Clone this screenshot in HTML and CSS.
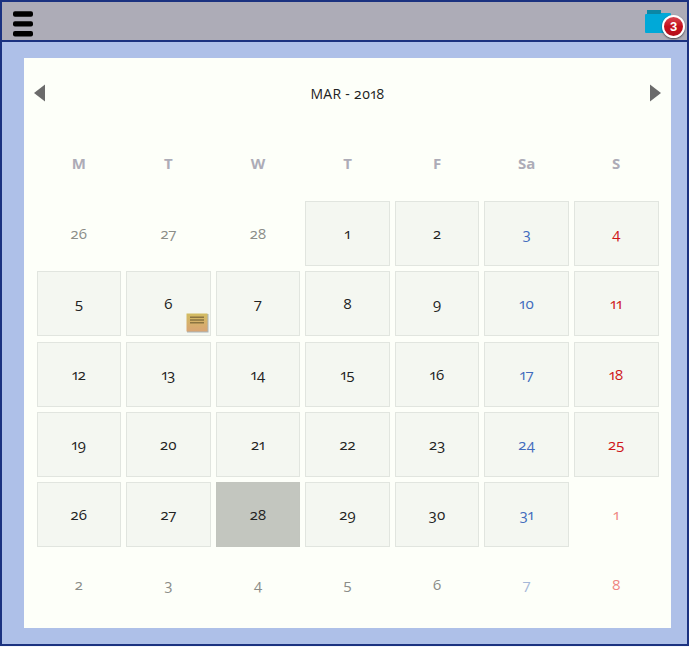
FILE: index.html
```
<!DOCTYPE html>
<html lang="en">
<head>
<meta charset="utf-8">
<title>Calendar</title>
<link rel="stylesheet" href="styles.css">
</head>
<body>
<div class="app">
  <header class="bar">
    <svg class="menu" width="20" height="26" viewBox="0 0 20 26"><rect y="0.3" width="20" height="5.4" rx="2"/><rect y="10.2" width="20" height="5.4" rx="2"/><rect y="20" width="20" height="5.4" rx="2"/></svg>
    <div class="folder">
      <svg width="26" height="23" viewBox="0 0 26 23"><path fill="#0b87a5" d="M2 4V0h14v3h8v5H2z"/><path fill="#00a9d8" d="M0 5q0-1 1-1h14l2-1h8q1 0 1 1v18q0 1-1 1H1q-1 0-1-1z"/></svg>
      <span class="badge">3</span>
    </div>
  </header>
  <main class="card">
    <div class="title">
      <svg width="11" height="18" viewBox="0 0 11 18"><path d="M0 9L11 .5v17z"/></svg>
      <span>MAR - 2018</span>
      <svg width="11" height="18" viewBox="0 0 11 18"><path d="M11 9L0 .5v17z"/></svg>
    </div>
    <div class="week"><span>M</span><span>T</span><span>W</span><span>T</span><span>F</span><span>Sa</span><span>S</span></div>
    <div class="days">
      <div class="out">26</div><div class="out">27</div><div class="out">28</div><div class="day">1</div><div class="day">2</div><div class="day sat">3</div><div class="day sun">4</div>
      <div class="day">5</div><div class="day">6<svg class="note" width="23" height="20" viewBox="0 0 23 20"><defs><linearGradient id="n" x2="0" y2="1"><stop stop-color="#d2bd62"/><stop offset="1" stop-color="#d9a574"/></linearGradient></defs><path fill="#a9b4b8" d="M1 1h21.5v18.5H1z"/><path fill="url(#n)" d="M.5.5h21v18H.5z"/><path stroke="#8b7440" stroke-width="1.6" d="M4 4.3h14M4 7h14M4 9.7h14"/></svg></div><div class="day">7</div><div class="day">8</div><div class="day">9</div><div class="day sat">10</div><div class="day sun">11</div>
      <div class="day">12</div><div class="day">13</div><div class="day">14</div><div class="day">15</div><div class="day">16</div><div class="day sat">17</div><div class="day sun">18</div>
      <div class="day">19</div><div class="day">20</div><div class="day">21</div><div class="day">22</div><div class="day">23</div><div class="day sat">24</div><div class="day sun">25</div>
      <div class="day">26</div><div class="day">27</div><div class="day today">28</div><div class="day">29</div><div class="day">30</div><div class="day sat">31</div><div class="out sun">1</div>
      <div class="out">2</div><div class="out">3</div><div class="out">4</div><div class="out">5</div><div class="out">6</div><div class="out sat">7</div><div class="out sun">8</div>
    </div>
  </main>
</div>
</body>
</html>
```
FILE: styles.css
```
* { box-sizing: border-box; }
body {
  margin: 0;
  background: #f4f7fb;
  font: 15px/20px "Open Sans", "Noto Sans", sans-serif;
  font-variant-numeric: oldstyle-nums proportional-nums;
  color: #222;
}
.app {
  height: 646px;
  border: 2px solid #1b3280;
  background: #aec0e8;
}
.bar {
  display: flex;
  justify-content: space-between;
  height: 40px;
  padding: 8px 16px 0 11px;
  border-bottom: 2px solid #1b3280;
  background: #adacb7;
}
.menu { margin-top: 1px; }
.folder { position: relative; width: 26px; height: 23px; }
.folder svg { display: block; }
.badge {
  position: absolute;
  left: 17px;
  top: 5px;
  width: 23px;
  height: 23px;
  border: 2px solid #fff;
  border-radius: 50%;
  background: linear-gradient(#d84550, #c4101d 50%, #b50f1b);
  box-shadow: 0 1px 2px #0009;
  color: #fff;
  font: bold 13px/19px "Liberation Sans", sans-serif;
  text-align: center;
}
.card {
  height: 570px;
  margin: 16px 16px 0 22px;
  background: #fdfff9;
}
.title {
  display: flex;
  justify-content: space-between;
  align-items: center;
  height: 70px;
  padding: 0 10px;
  fill: #6b6b6b;
  font-size: 14px;
  letter-spacing: .3px;
}
.title span { padding-top: 2px; }
.week, .days {
  display: grid;
  grid-template-columns: repeat(7, 1fr);
  column-gap: 5px;
  padding: 0 12.5px 0 12.6px;
  text-align: center;
}
.week {
  height: 73px;
  padding-top: 25px;
  color: #adacb7;
  font-weight: 700;
}
.days {
  grid-auto-rows: 65px;
  row-gap: 5.25px;
}
.day, .out {
  position: relative;
  display: flex;
  align-items: center;
  justify-content: center;
  padding-bottom: 1px;
}
.day {
  border: 1px solid #e1e5df;
  background: #f4f7f1;
}
.out { color: #8b8d88; }
.day.sat { color: #416bbd; }
.day.sun { color: #cf1518; }
.out.sat { color: #a5b8d8; }
.out.sun { color: #ef8581; }
.day.today { border-color: #c2c5be; background: #c3c6bf; }
.note { position: absolute; right: 1px; bottom: 2px; }
```
